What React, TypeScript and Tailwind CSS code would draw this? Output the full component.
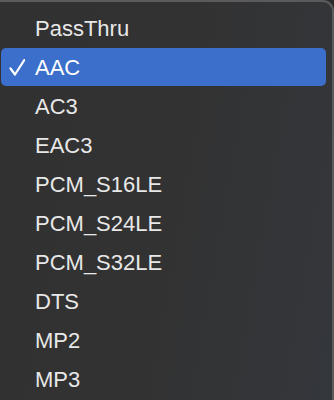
const items = [
  'PassThru',
  'AAC',
  'AC3',
  'EAC3',
  'PCM_S16LE',
  'PCM_S24LE',
  'PCM_S32LE',
  'DTS',
  'MP2',
  'MP3',
];

const selected = 'AAC';

const Check = () => (
  <svg width="16" height="17" viewBox="0 0 16 17" className="absolute left-[8px] top-[11px]">
    <path d="M1.5 9.5 L6 15.5 L15.3 1" fill="none" stroke="#ffffff" strokeWidth="2.2" strokeLinecap="round" strokeLinejoin="round" />
  </svg>
);

export default function App() {
  return (
    <div className="w-[334px] h-[400px] overflow-hidden bg-[#2b2b2b]">
      <div
        className="h-[420px] -ml-[12px] rounded-tr-[11px] border-t-2 border-r-2 border-[#5b5b5d] bg-[linear-gradient(100deg,#313131_0%,#323232_50%,#34373c_100%)] pt-[6px] pl-[12px]"
        style={{ fontFamily: '"Liberation Sans", Arial, sans-serif' }}
      >
        <ul className="flex flex-col">
          {items.map((item) => {
            const active = item === selected;
            return (
              <li key={item} className="h-[39px] flex items-center">
                <div
                  className={`relative w-[325px] h-[38px] ml-[1px] flex items-center pl-[34px] rounded-[5px] text-[22px] leading-none text-[#e8e8e8] ${active ? 'bg-[#3b6fcb] text-white' : ''}`}
                >
                  {active && <Check />}
                  <span className="pt-[2px]">{item}</span>
                </div>
              </li>
            );
          })}
        </ul>
      </div>
    </div>
  );
}
